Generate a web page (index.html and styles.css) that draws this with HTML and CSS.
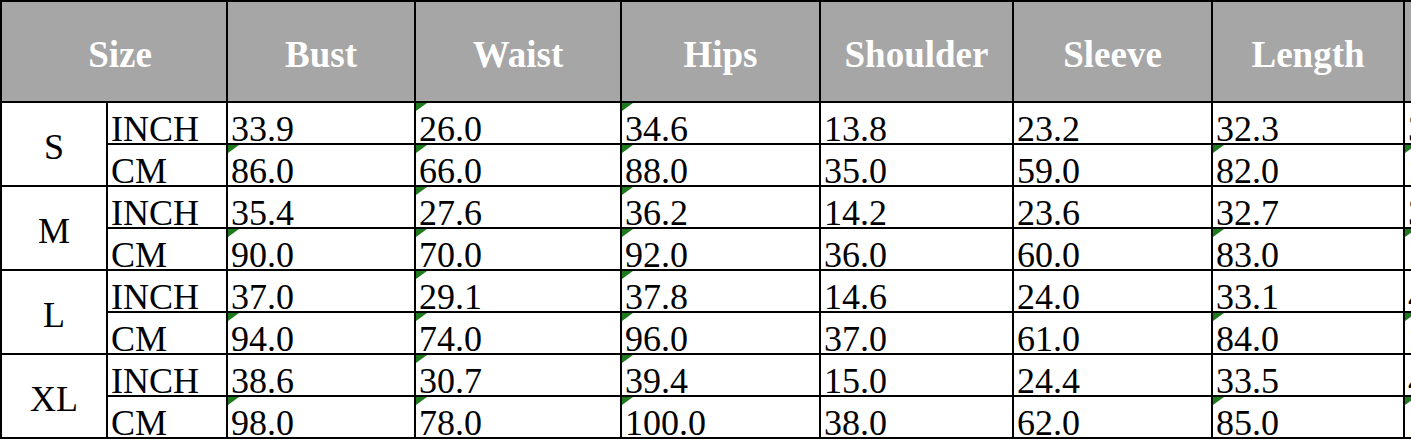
FILE: index.html
```html
<!DOCTYPE html>
<html lang="en">
<head>
<meta charset="utf-8">
<title>Size Chart</title>
<link rel="stylesheet" href="styles.css">
</head>
<body>
<div class="sheet">
  <div class="hd hd-size">Size</div>
  <div class="hd">Bust</div>
  <div class="hd">Waist</div>
  <div class="hd">Hips</div>
  <div class="hd">Shoulder</div>
  <div class="hd">Sleeve</div>
  <div class="hd">Length</div>
  <div class="hd">Hem</div>

  <div class="size">S</div>
  <div class="c">INCH</div>
  <div class="c">33.9</div><div class="c flag">26.0</div><div class="c flag">34.6</div><div class="c">13.8</div><div class="c">23.2</div><div class="c">32.3</div><div class="c">39.4</div>
  <div class="c">CM</div>
  <div class="c flag">86.0</div><div class="c flag">66.0</div><div class="c flag">88.0</div><div class="c">35.0</div><div class="c">59.0</div><div class="c flag">82.0</div><div class="c flag">100.0</div>

  <div class="size">M</div>
  <div class="c">INCH</div>
  <div class="c">35.4</div><div class="c flag">27.6</div><div class="c flag">36.2</div><div class="c">14.2</div><div class="c">23.6</div><div class="c">32.7</div><div class="c">39.8</div>
  <div class="c">CM</div>
  <div class="c flag">90.0</div><div class="c flag">70.0</div><div class="c flag">92.0</div><div class="c">36.0</div><div class="c">60.0</div><div class="c flag">83.0</div><div class="c flag">101.0</div>

  <div class="size">L</div>
  <div class="c">INCH</div>
  <div class="c">37.0</div><div class="c flag">29.1</div><div class="c flag">37.8</div><div class="c">14.6</div><div class="c">24.0</div><div class="c">33.1</div><div class="c">40.9</div>
  <div class="c">CM</div>
  <div class="c flag">94.0</div><div class="c flag">74.0</div><div class="c flag">96.0</div><div class="c">37.0</div><div class="c">61.0</div><div class="c flag">84.0</div><div class="c flag">104.0</div>

  <div class="size">XL</div>
  <div class="c">INCH</div>
  <div class="c">38.6</div><div class="c flag">30.7</div><div class="c flag">39.4</div><div class="c">15.0</div><div class="c">24.4</div><div class="c">33.5</div><div class="c">42.5</div>
  <div class="c">CM</div>
  <div class="c flag">98.0</div><div class="c flag">78.0</div><div class="c flag">100.0</div><div class="c">38.0</div><div class="c">62.0</div><div class="c flag">85.0</div><div class="c flag">108.0</div>
</div>
</body>
</html>
```

FILE: styles.css
```css
html, body {
  margin: 0;
  padding: 0;
  background: #ffffff;
  overflow: hidden;
}

.sheet {
  display: grid;
  grid-template-columns: 104px 118px 186px 204px 197px 191px 197px 190px 200px;
  grid-template-rows: 99px repeat(8, 40px);
  gap: 2px;
  padding: 2px;
  background: #000000;
  width: max-content;
  font-family: "Liberation Serif", "Times New Roman", serif;
  color: #000000;
}

.hd {
  background: #a6a6a6;
  color: #ffffff;
  font-weight: bold;
  font-size: 37px;
  display: flex;
  align-items: center;
  justify-content: center;
  padding-top: 6px;
  box-sizing: border-box;
}

.hd-size {
  grid-column: span 2;
  padding-left: 12px;
}

.size {
  grid-row: span 2;
  background: #ffffff;
  font-size: 36px;
  display: flex;
  align-items: center;
  justify-content: center;
  padding-top: 5px;
  box-sizing: border-box;
}

.c {
  background: #ffffff;
  font-size: 36px;
  line-height: 28px;
  display: flex;
  align-items: flex-end;
  padding-left: 3px;
  white-space: nowrap;
  position: relative;
}

.flag::before {
  content: "";
  position: absolute;
  left: 0;
  top: 0;
  width: 11px;
  height: 8px;
  background: #1f7a1f;
  clip-path: polygon(0 0, 100% 0, 0 100%);
}
```
